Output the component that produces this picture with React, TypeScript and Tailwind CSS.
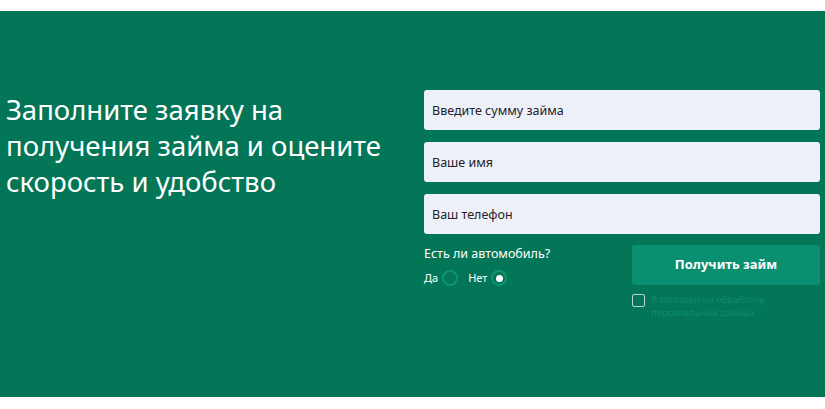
import { useState } from "react";

const fields = ["Введите сумму займа", "Ваше имя", "Ваш телефон"];

export default function App() {
  const [hasCar, setHasCar] = useState(false);
  const [agree, setAgree] = useState(false);

  return (
    <div className="bg-white pt-[11px] pb-[12px]" style={{ fontFamily: "'Noto Sans', 'Open Sans', sans-serif" }}>
      <section className="flex h-[386px] bg-[#027657] pl-[6px] pr-[5px] pt-[79px]">
        <h1 className="w-[418px] pt-[2px] text-[27.5px] font-normal leading-[36px] text-white">
          Заполните заявку на получения займа и оцените скорость и удобство
        </h1>

        <form className="w-[396px]" onSubmit={(e) => e.preventDefault()}>
          <div className="flex flex-col gap-3">
            {fields.map((label) => (
              <input
                key={label}
                placeholder={label}
                className="h-10 w-full rounded-[3px] bg-[#edf1f7] px-[8px] text-[12.5px] text-[#1f2937] outline-none placeholder:text-[#1f2228]"
              />
            ))}
          </div>

          <div className="mt-[11px] flex">
            <div className="w-[208px]">
              <p className="text-[12.5px] leading-[18px] text-white">Есть ли автомобиль?</p>
              <div className="mt-[7px] flex items-center text-[11px] text-white">
                <span>Да</span>
                <button
                  type="button"
                  onClick={() => setHasCar(true)}
                  className="ml-[4px] flex h-[16px] w-[16px] items-center justify-center rounded-full border-2 border-[#0c9672]"
                  aria-label="Да"
                >
                  {hasCar && <span className="h-[7px] w-[7px] rounded-full bg-white" />}
                </button>
                <span className="ml-[10px]">Нет</span>
                <button
                  type="button"
                  onClick={() => setHasCar(false)}
                  className="ml-[4px] flex h-[16px] w-[16px] items-center justify-center rounded-full border-2 border-[#0c9672]"
                  aria-label="Нет"
                >
                  {!hasCar && <span className="h-[7px] w-[7px] rounded-full bg-white" />}
                </button>
              </div>
            </div>

            <div className="w-[188px]">
              <button
                type="submit"
                className="h-10 w-full rounded-[3px] bg-[#0a9070] text-[13px] font-bold text-white"
              >
                Получить займ
              </button>
              <label className="mt-[8px] flex items-start gap-[6px]">
                <button
                  type="button"
                  onClick={() => setAgree(!agree)}
                  className="mt-[1px] h-[13px] w-[13px] shrink-0 rounded-[2px] border-[1.5px] border-[#b9d6cd]"
                  aria-label="Согласие"
                />
                <span className="text-[9.5px] leading-[13px] text-[#0f8c6a]">
                  Я согласен на обработку
                  <br />
                  персональных данных.
                </span>
              </label>
            </div>
          </div>
        </form>
      </section>
    </div>
  );
}
